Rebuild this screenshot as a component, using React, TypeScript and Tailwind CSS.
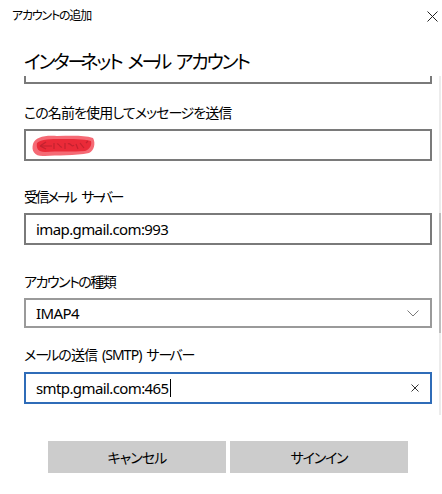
import React from "react";

const jp = "font-['Noto_Sans','Noto_Sans_CJK_JP',sans-serif] [font-feature-settings:'palt']";

function Label({ children, className = "" }: { children: React.ReactNode; className?: string }) {
  return <div className={`h-[20px] leading-[20px] text-[14px] text-black ${className}`}>{children}</div>;
}

function Bar({ className = "tracking-[-4px]" }: { className?: string }) {
  return <span className={className}>ー</span>;
}

export default function App() {
  return (
    <div className={`w-[442px] h-[494px] bg-white overflow-hidden flex flex-col ${jp}`}>
      {/* title bar */}
      <div className="h-[32px] flex items-center justify-between pl-[12px] pr-[4px]">
        <span className="text-[12px] text-black leading-[16px] tracking-[-1.2px]">アカウントの追加</span>
        <svg width="11" height="11" viewBox="0 0 11 11">
          <path d="M0.5 0.5 L10.5 10.5 M10.5 0.5 L0.5 10.5" stroke="#222" strokeWidth="1" fill="none" />
        </svg>
      </div>

      <div className="mt-[16px] px-[24px] h-[28px] leading-[28px] text-[19px] tracking-[-2.2px] [word-spacing:3px] text-black">
        インタ<Bar className="tracking-[-6px]" />ネット メ<Bar className="tracking-[-6px]" />ル アカウント
      </div>

      {/* scroll area */}
      <div className="relative h-[339px] overflow-hidden">
        <div className="pl-[24px] pr-[10px] flex flex-col">
          <div className="-mt-[24px] h-[32px] border-2 border-[#7a7a7a]" />

          <Label className="mt-[19px] tracking-[-0.9px]">この名前を使用してメッセ<Bar className="tracking-[-2px]" />ジを送信</Label>
          <div className="mt-[6px] h-[32px] border-2 border-[#7a7a7a] relative">
            <svg width="72" height="30" viewBox="0 0 72 30" className="absolute left-[1px] top-[0px]">
              <path d="M6 13 C8 6 18 4 30 5 C44 5 56 4 66 7 C69 12 67 20 62 22 C48 25 30 24 18 25 C8 26 4 20 6 13 Z" fill="#f3505d" opacity="0.85" />
              <path d="M10 12 C14 8 24 8 34 8 C46 8 56 8 64 10 C65 14 63 18 58 20 C46 21 30 20 18 21 C11 21 9 17 10 12 Z" fill="#ea2a38" />
              <path d="M13 15 L19 11 M13 15 L19 18 M13 15 L25 15 M27 12 L27 18 M30 13 C32 12 33 17 35 16 M38 12 L38 18 M41 13 C43 11 45 17 47 14 M49 13 L51 18 M53 12 L57 17 M59 12 L61 10" stroke="#a81c2a" strokeWidth="1.2" fill="none" opacity="0.6" />
            </svg>
          </div>

          <Label className="mt-[26px] tracking-[-2.5px] [word-spacing:5px]">受信メ<Bar className="tracking-[-6px]" />ル サ<Bar className="tracking-[-6px]" />バ<Bar className="tracking-[-6px]" /></Label>
          <div className="mt-[6px] h-[32px] border-2 border-[#7a7a7a] pl-[10px] flex items-center text-[15px] tracking-[-0.6px] text-black">
            imap.gmail.com:993
          </div>

          <Label className="mt-[27px] tracking-[-1.5px]">アカウントの種類</Label>
          <div className="mt-[6px] h-[30px] border-2 border-[#9a9a9a] pl-[10px] pr-[11px] flex items-center justify-between text-[15px] tracking-[-0.6px] text-black">
            <span>IMAP4</span>
            <svg width="12" height="7" viewBox="0 0 12 7">
              <path d="M0.5 0.5 L6 6 L11.5 0.5" stroke="#7a7a7a" strokeWidth="1" fill="none" />
            </svg>
          </div>

          <Label className="mt-[17px] tracking-[-0.9px] [word-spacing:2px]">メ<Bar className="tracking-[-3px]" />ルの送信 (SMTP) サ<Bar className="tracking-[-3px]" />バ<Bar className="tracking-[-3px]" /></Label>
          <div className="mt-[7px] h-[32px] border-2 border-[#2f6cb8] pl-[10px] pr-[11px] flex items-center justify-between text-[15px] tracking-[-0.6px] text-black">
            <span className="flex items-center">
              smtp.gmail.com:465
              <span className="inline-block w-[1px] h-[18px] bg-black ml-[1px]" />
            </span>
            <svg width="8" height="8" viewBox="0 0 8 8">
              <path d="M0.5 0.5 L7.5 7.5 M7.5 0.5 L0.5 7.5" stroke="#333" strokeWidth="1" fill="none" />
            </svg>
          </div>
        </div>

        {/* scrollbar */}
        <div className="absolute right-[1px] top-0 w-[2px] h-full bg-[#ececec]">
          <div className="absolute left-0 top-[137px] w-[2px] h-[120px] bg-[#bdbdbd]" />
        </div>
      </div>

      {/* buttons */}
      <div className="mt-[26px] pl-[48px] flex gap-[4px]">
        <div className="w-[178px] h-[32px] bg-[#cccccc] flex items-center justify-center text-[14px] tracking-[-0.9px] text-black">キャンセル</div>
        <div className="w-[178px] h-[32px] bg-[#cccccc] flex items-center justify-center text-[14px] tracking-[-1.2px] text-black">サインイン</div>
      </div>
    </div>
  );
}
